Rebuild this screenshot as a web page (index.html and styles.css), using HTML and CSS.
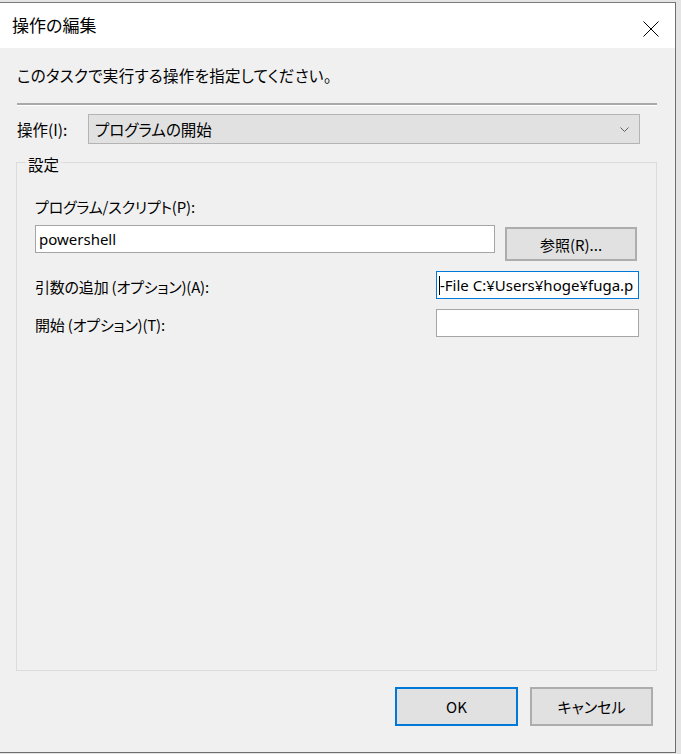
FILE: index.html
```html
<!DOCTYPE html>
<html lang="ja">
<head>
<meta charset="utf-8">
<title>操作の編集</title>
<link rel="stylesheet" href="styles.css">
</head>
<body>
<div class="window">
  <div class="titlebar">
    <span class="title">操作の編集</span>
    <svg class="close" width="16" height="16" viewBox="0 0 16 16"><path d="M0.5 0.5 L15.5 15.5 M15.5 0.5 L0.5 15.5" stroke="#000" stroke-width="1" fill="none"/></svg>
  </div>
  <div class="content">
    <p class="intro">このタスクで実行する操作を指定してください。</p>
    <div class="separator"></div>
    <div class="action-row">
      <span class="label">操作(I):</span>
      <div class="combo">
        <span class="combo-text">プログラムの開始</span>
        <svg class="chevron" width="9" height="5" viewBox="0 0 9 5"><path d="M0.5 0.5 L4.5 4.5 L8.5 0.5" stroke="#606060" stroke-width="1" fill="none"/></svg>
      </div>
    </div>
    <fieldset class="group">
      <legend class="legend">設定</legend>
      <div class="field-label">プログラム/スクリプト(P):</div>
      <div class="program-row">
        <div class="textbox program-box">powershell</div>
        <div class="button browse">参照(R)...</div>
      </div>
      <div class="option-row">
        <span class="option-label">引数の追加 (オプション)(A):</span>
        <div class="textbox small-box focused"><span class="caret"></span>-File C:¥Users¥hoge¥fuga.p</div>
      </div>
      <div class="option-row second">
        <span class="option-label">開始 (オプション)(T):</span>
        <div class="textbox small-box"></div>
      </div>
    </fieldset>
    <div class="footer">
      <div class="button dialog-btn default">OK</div>
      <div class="button dialog-btn">キャンセル</div>
    </div>
  </div>
</div>
</body>
</html>
```
FILE: styles.css
```css
html, body {
  margin: 0;
  padding: 0;
}
body {
  background: #e4e4e4;
  width: 681px;
  height: 754px;
  overflow: hidden;
  font-family: "Noto Sans CJK JP", "Noto Sans", sans-serif;
  font-feature-settings: "palt";
  color: #000;
}
.window {
  margin-top: 2px;
  width: 675px;
  height: 749px;
  border-top: 1px solid #7a7a7a;
  border-right: 1px solid #6e6e6e;
  border-bottom: 1px solid #6e6e6e;
  display: flex;
  flex-direction: column;
  background: #f0f0f0;
}
.titlebar {
  height: 45px;
  background: #fff;
  display: flex;
  align-items: center;
  justify-content: space-between;
  padding: 0 16px 0 12px;
  flex: none;
}
.title {
  font-size: 17px;
  line-height: 22px;
  margin-top: -2px;
}
.close {
  display: block;
  margin-top: 6px;
}
.content {
  flex: 1;
  display: flex;
  flex-direction: column;
  padding: 0 18px 0 16px;
  font-size: 15.5px;
}
.intro {
  margin: 16px 0 0 1px;
  line-height: 22px;
  font-size: 15.5px;
  letter-spacing: 0.3px;
}
.separator {
  margin: 17px 0 0 1px;
  height: 2px;
  background: #a9a9a9;
  border-bottom: 1px solid #fff;
}
.action-row {
  display: flex;
  align-items: center;
  margin-top: 8px;
}
.label {
  width: 72px;
  padding-left: 1px;
  box-sizing: border-box;
  font-size: 15.5px;
  line-height: 20px;
}
.combo {
  width: 552px;
  height: 30px;
  box-sizing: border-box;
  background: #e1e1e1;
  border: 1px solid #b4b4b4;
  display: flex;
  align-items: center;
  justify-content: space-between;
  padding: 0 10px 0 6px;
}
.combo-text {
  font-size: 15.5px;
  line-height: 20px;
}
.chevron {
  display: block;
}
.group {
  margin: 8px 0 0 0;
  border: 1px solid #dcdcdc;
  padding: 25px 17px 0 18px;
  flex: 1;
  min-width: 0;
}
.legend {
  margin-left: -9px;
  padding: 0 2px;
  font-size: 15.5px;
  line-height: 20px;
  position: relative;
  top: 2px;
}
.field-label,
.option-label {
  font-size: 15px;
  line-height: 20px;
  letter-spacing: -0.2px;
}
.program-row {
  display: flex;
  align-items: flex-start;
  justify-content: space-between;
  margin-top: 8px;
}
.textbox {
  box-sizing: border-box;
  height: 28px;
  background: #fff;
  border: 1px solid #a5a5a5;
  font-family: "Noto Sans", "Noto Sans CJK JP", sans-serif;
  font-feature-settings: normal;
  font-size: 15px;
  line-height: 26px;
  padding: 0 3px;
  white-space: nowrap;
  overflow: hidden;
}
.program-box {
  width: 460px;
}
.button {
  box-sizing: border-box;
  background: #e1e1e1;
  border: 2px solid #adadad;
  display: flex;
  align-items: center;
  justify-content: center;
  font-size: 15px;
}
.browse {
  width: 132px;
  height: 34px;
  margin: 2px 2px 0 0;
}
.option-row {
  display: flex;
  align-items: center;
  justify-content: space-between;
  margin-top: 10px;
}
.option-row.second {
  margin-top: 10px;
}
.option-label {
  padding-top: 3px;
}
.small-box {
  width: 203px;
  padding: 0 2px;
}
.small-box.focused {
  border-color: #0078d7;
}
.caret {
  display: inline-block;
  width: 1px;
  height: 19px;
  background: #000;
  vertical-align: -4px;
}
.footer {
  flex: none;
  display: flex;
  justify-content: flex-end;
  gap: 12px;
  margin: 16px 4px 26px 0;
}
.dialog-btn {
  width: 123px;
  height: 39px;
}
.dialog-btn.default {
  border-color: #0078d7;
}
```
